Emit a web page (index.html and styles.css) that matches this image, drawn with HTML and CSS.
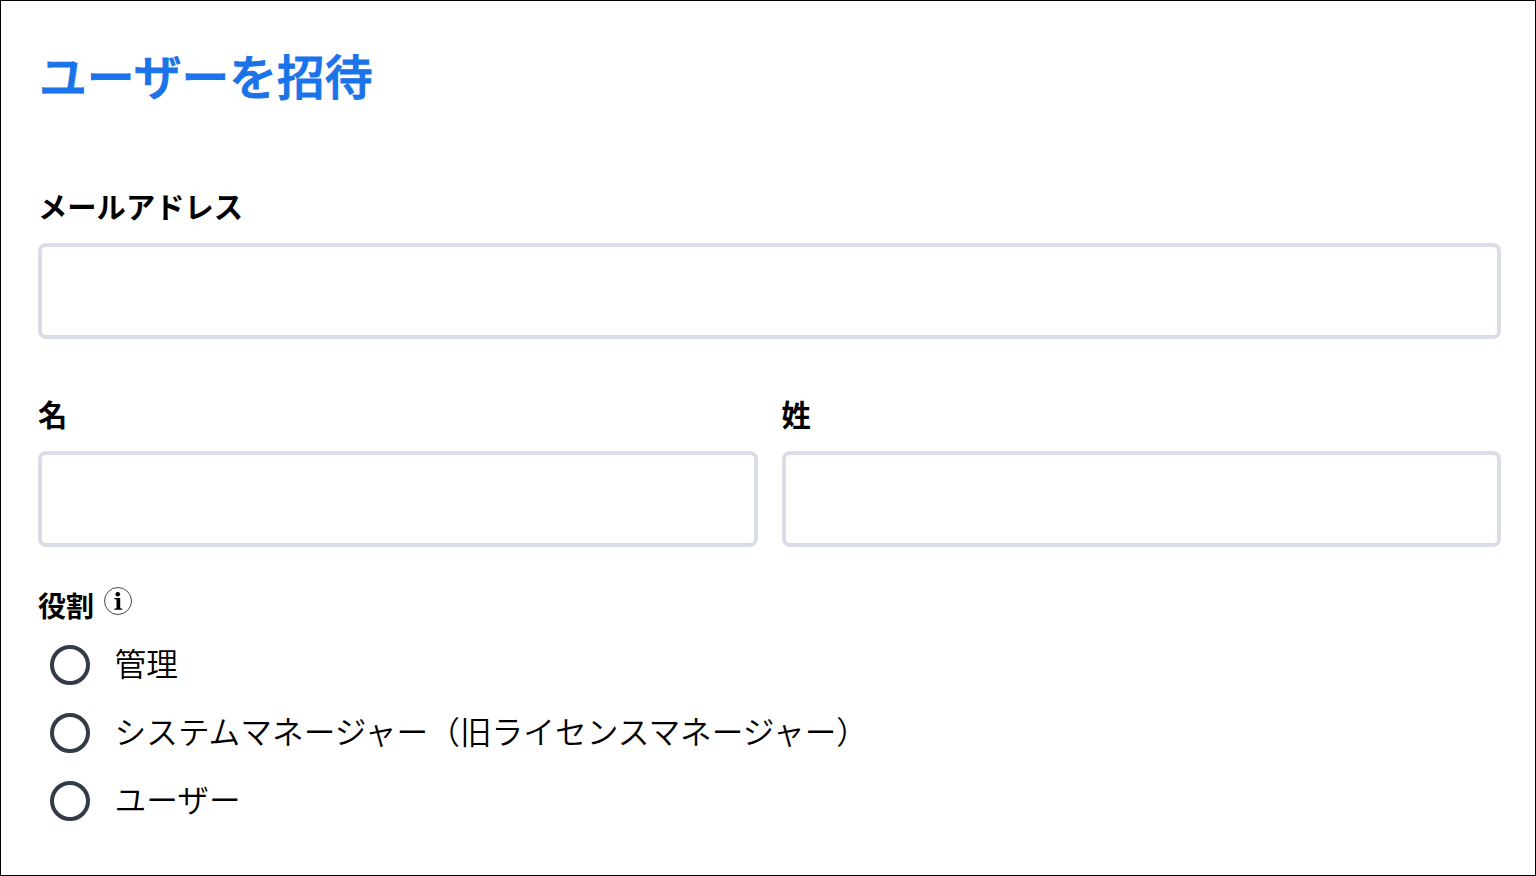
FILE: index.html
```
<!DOCTYPE html>
<html lang="ja">
<head>
  <meta charset="UTF-8">
  <meta name="viewport" content="width=device-width, initial-scale=1.0">
  <title>ユーザーを招待</title>
  <link rel="stylesheet" href="styles.css">
</head>
<body>
  <form class="invite-form">
    <h1 class="title">ユーザーを招待</h1>

    <div class="field">
      <label class="field-label" for="email">メールアドレス</label>
      <input class="field-input" type="email" id="email">
    </div>

    <div class="name-row">
      <div class="field">
        <label class="field-label" for="first-name">名</label>
        <input class="field-input" type="text" id="first-name">
      </div>
      <div class="field">
        <label class="field-label" for="last-name">姓</label>
        <input class="field-input" type="text" id="last-name">
      </div>
    </div>

    <div class="role-header">
      <span class="role-label">役割</span>
      <svg class="info-icon" viewBox="0 0 28 28">
        <circle cx="14" cy="14" r="13.5" fill="none" stroke="#333" stroke-width="0.9"/>
        <circle cx="13.8" cy="7.2" r="2.3"/>
        <path d="M10.4 10.9h5.8v10.4l2.1.5v1h-8v-1l2.2-.5v-8.9l-2.1-.5z"/>
      </svg>
    </div>

    <div class="role-list">
      <label class="role-option"><input class="radio" type="radio" name="role"><span class="role-name">管理</span></label>
      <label class="role-option"><input class="radio" type="radio" name="role"><span class="role-name">システムマネージャー（旧ライセンスマネージャー）</span></label>
      <label class="role-option"><input class="radio" type="radio" name="role"><span class="role-name">ユーザー</span></label>
    </div>
  </form>
</body>
</html>
```
FILE: styles.css
```
* {
  box-sizing: border-box;
}
body {
  margin: 0;
  background-color: #fff;
  color: #000;
  font-family: "Noto Sans CJK JP", sans-serif;
}
.invite-form {
  height: 876px;
  padding: 38px 34px 0 37px;
  border: 1px solid #000;
}
.title {
  margin: 0;
  height: 72px;
  padding-left: 1px;
  line-height: 72px;
  font-size: 47.8px;
  font-weight: 500;
  color: #1a73e8;
  -webkit-text-stroke: 1px #1a73e8;
}
.field {
  display: flex;
  flex-direction: column;
  flex: 1;
}
.title + .field {
  margin-top: 74px;
}
.field-label {
  height: 58px;
  line-height: 40px;
  font-size: 29.3px;
  font-weight: 700;
}
.field-input {
  width: 100%;
  height: 96px;
  padding: 0 20px;
  border: 4px solid #dadde5;
  border-radius: 8px;
  background-color: #fff;
  font-size: 30px;
}
.name-row {
  display: flex;
  gap: 24px;
  margin-top: 54px;
}
.role-header {
  display: flex;
  gap: 10px;
  height: 84px;
  padding-top: 40px;
}
.role-label {
  line-height: 36px;
  font-size: 28px;
  font-weight: 700;
}
.info-icon {
  width: 28px;
  height: 28px;
}
.role-list {
  display: flex;
  flex-direction: column;
}
.role-option {
  display: flex;
  align-items: center;
  gap: 24.5px;
  height: 68px;
  padding-left: 12px;
  font-size: 31.7px;
  font-weight: 350;
}
.role-name {
  padding-bottom: 6px;
}
.radio {
  appearance: none;
  width: 40px;
  height: 40px;
  margin: 0;
  border: 4px solid #323b47;
  border-radius: 50%;
}
```
